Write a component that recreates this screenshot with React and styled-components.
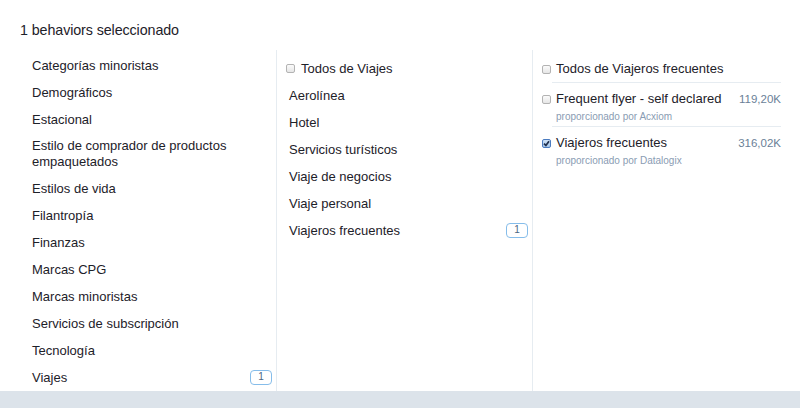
import styled, { createGlobalStyle } from 'styled-components';

const GlobalStyle = createGlobalStyle`
	html, body {
		margin: 0;
		padding: 0;
		background: #fff;
	}
	body {
		font-family: 'Liberation Sans', Arial, sans-serif;
		color: #1d2129;
	}
`;

const categories = [
	{ name: 'Categorías minoristas' },
	{ name: 'Demográficos' },
	{ name: 'Estacional' },
	{ name: 'Estilo de comprador de productos empaquetados' },
	{ name: 'Estilos de vida' },
	{ name: 'Filantropía' },
	{ name: 'Finanzas' },
	{ name: 'Marcas CPG' },
	{ name: 'Marcas minoristas' },
	{ name: 'Servicios de subscripción' },
	{ name: 'Tecnología' },
	{ name: 'Viajes', count: 1 },
];

const travel = [
	{ name: 'Aerolínea' },
	{ name: 'Hotel' },
	{ name: 'Servicios turísticos' },
	{ name: 'Viaje de negocios' },
	{ name: 'Viaje personal' },
	{ name: 'Viajeros frecuentes', count: 1 },
];

const behaviors = [
	{
		name: 'Frequent flyer - self declared',
		source: 'proporcionado por Acxiom',
		size: '119,20K',
		checked: false,
	},
	{
		name: 'Viajeros frecuentes',
		source: 'proporcionado por Datalogix',
		size: '316,02K',
		checked: true,
	},
];

const Checkbox = ({ checked }) => (
	<Box $checked={checked}>
		{checked && (
			<svg width='7' height='7' viewBox='0 0 7 7'>
				<path
					d='M1 3.6 L2.9 5.4 L6 1.2'
					fill='none'
					stroke='#1f2f4d'
					strokeWidth='1.7'
				/>
			</svg>
		)}
	</Box>
);

const App = () => {
	return (
		<Page>
			<GlobalStyle />
			<Title>1 behaviors seleccionado</Title>
			<Columns>
				<Column $width='277px' $pad='32px' $top='2.5px'>
					{categories.map((el, i) => (
						<Row key={i}>
							<RowLabel $wrap>{el.name}</RowLabel>
							{el.count && <Badge>{el.count}</Badge>}
						</Row>
					))}
				</Column>

				<Column $width='256px' $pad='12px' $top='5px'>
					<Row $shift='-3px'>
						<CheckLabel $gap='6px'>
							<Checkbox />
							Todos de Viajes
						</CheckLabel>
					</Row>
					{travel.map((el, i) => (
						<Row key={i}>
							<RowLabel>{el.name}</RowLabel>
							{el.count && <Badge>{el.count}</Badge>}
						</Row>
					))}
				</Column>

				<Column $width='auto' $pad='9px' $top='5px' $last>
					<AllRow>
						<CheckLabel>
							<Checkbox />
							Todos de Viajeros frecuentes
						</CheckLabel>
					</AllRow>
					{behaviors.map((el, i) => (
						<BehaviorItem key={i} $last={i === behaviors.length - 1}>
							<BehaviorTop>
								<CheckLabel>
									<Checkbox checked={el.checked} />
									{el.name}
								</CheckLabel>
								<Size>{el.size}</Size>
							</BehaviorTop>
							<Source>{el.source}</Source>
						</BehaviorItem>
					))}
				</Column>
			</Columns>
			<Footer />
		</Page>
	);
};

const Page = styled.div`
	height: 408px;
	width: 800px;
	display: flex;
	flex-direction: column;
	overflow: hidden;
`;

const Title = styled.h2`
	margin: 0;
	height: 50px;
	box-sizing: border-box;
	padding: 21px 0 0 20px;
	font-size: 14.3px;
	font-weight: 400;
	line-height: 18px;
	color: #1d2129;
	letter-spacing: -0.1px;
`;

const Columns = styled.div`
	flex: 1;
	display: flex;
	min-height: 0;
`;

const Column = styled.div`
	width: ${(p) => p.$width};
	flex: ${(p) => (p.$last ? '1' : 'none')};
	box-sizing: border-box;
	padding: ${(p) => p.$top} 4px 0 ${(p) => p.$pad};
	border-right: ${(p) => (p.$last ? 'none' : '1px solid #e6ecf1')};
	display: flex;
	flex-direction: column;
`;

const Row = styled.div`
	display: flex;
	align-items: center;
	justify-content: space-between;
	padding: 5.5px 0;
	min-height: 16px;
	margin-left: ${(p) => p.$shift || '0'};
`;

const RowLabel = styled.span`
	font-size: 13px;
	line-height: 16px;
	color: #1d2129;
	max-width: ${(p) => (p.$wrap ? '205px' : 'none')};
`;

const CheckLabel = styled.span`
	display: flex;
	align-items: center;
	gap: ${(p) => p.$gap || '5px'};
	font-size: 13px;
	line-height: 16px;
	color: #1d2129;
`;

const Box = styled.span`
	width: 9px;
	height: 9px;
	box-sizing: border-box;
	border-radius: 2px;
	border: 1px solid ${(p) => (p.$checked ? '#4a7bc0' : '#b3b3b3')};
	background: ${(p) =>
		p.$checked
			? 'linear-gradient(#cfe2f6, #a6c6ea)'
			: 'linear-gradient(#fbfbfb, #e6e6e6)'};
	display: inline-flex;
	align-items: center;
	justify-content: center;
	flex: none;
`;

const Badge = styled.span`
	width: 22px;
	height: 15px;
	box-sizing: border-box;
	border: 1.5px solid #86bdea;
	border-radius: 4px;
	font-size: 10px;
	line-height: 12px;
	text-align: center;
	color: #4b6584;
	flex: none;
`;

const AllRow = styled.div`
	padding: 6px 0 6px 0;
	margin-right: 15px;
	position: relative;
	&::after {
		content: '';
		position: absolute;
		left: 10px;
		right: 0;
		bottom: 0;
		border-bottom: 1px solid #e6ecf1;
	}
`;

const BehaviorItem = styled.div`
	padding: 8px 0 4px 0;
	margin-right: 15px;
	position: relative;
	&::after {
		content: '';
		display: ${(p) => (p.$last ? 'none' : 'block')};
		position: absolute;
		left: 10px;
		right: 0;
		bottom: 0;
		border-bottom: 1px solid #e6ecf1;
	}
`;

const BehaviorTop = styled.div`
	display: flex;
	align-items: center;
	justify-content: space-between;
`;

const Size = styled.span`
	font-size: 11.5px;
	color: #6b7f97;
`;

const Source = styled.div`
	padding-left: 14px;
	margin-top: 3px;
	font-size: 10px;
	line-height: 13px;
	color: #8a9cb3;
`;

const Footer = styled.div`
	height: 17px;
	flex: none;
	background: #dce3ea;
`;

export default App;
